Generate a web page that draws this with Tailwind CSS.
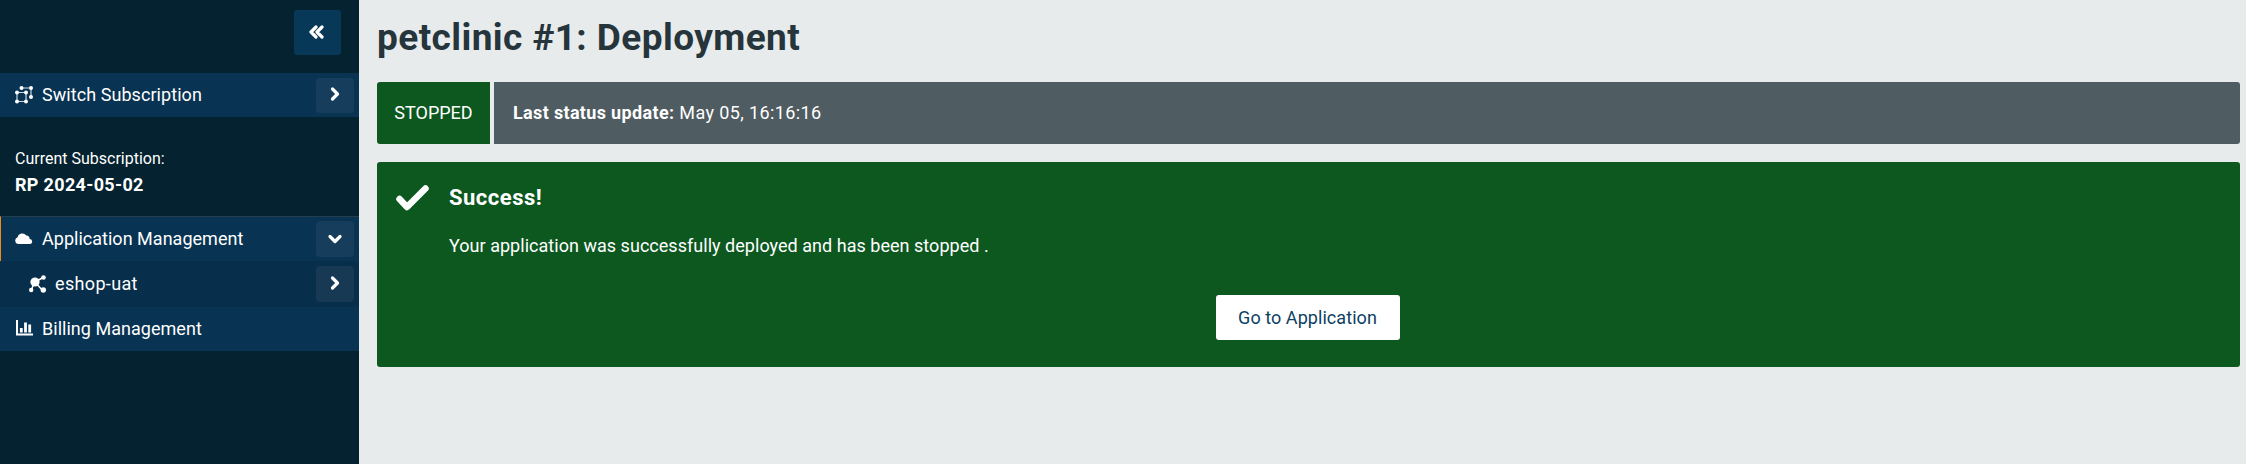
<!DOCTYPE html>
<html lang="en">
<head>
<meta charset="utf-8">
<title>petclinic #1: Deployment</title>
<script src="https://cdn.jsdelivr.net/npm/@tailwindcss/browser@4"></script>
</head>
<body class="h-[464px] overflow-hidden bg-[#e7ebec] text-[18px] whitespace-nowrap text-white font-['Roboto',sans-serif]">
<div class="flex h-full">
  <aside class="w-[359px] shrink-0 bg-[#04222f]">
    <div class="flex h-[73px] justify-end pt-2.5 pr-[18px]">
      <button class="flex h-[45px] w-[47px] items-center justify-center rounded-[3px] bg-[#083857]">
        <svg class="mr-[3px] mb-px h-4 w-4" viewBox="0 0 16 16" fill="none" stroke="currentColor" stroke-width="3.200" stroke-linecap="round" stroke-linejoin="round"><path d="M8 3 3 8l5 5M14 3 9 8l5 5"/></svg>
      </button>
    </div>
    <div class="flex h-11 items-center bg-[#083352] pr-[5px] pl-[15px]">
      <svg class="mt-[-1px] h-[18px] w-[18px]" viewBox="0 0 18 18" fill="none" stroke="currentColor"><path d="M2 6.500h9v9H2zM7 2h9v9" stroke-width="1.200" stroke-opacity=".8"/><g fill="currentColor" stroke="none"><circle cx="2" cy="6.500" r="2"/><circle cx="11" cy="6.500" r="2"/><circle cx="2" cy="15.500" r="2"/><circle cx="11" cy="15.500" r="2"/><circle cx="6.500" cy="2" r="2"/><circle cx="16" cy="2" r="2"/><circle cx="16" cy="11" r="2"/></g></svg>
      <span class="ml-[9px] pb-0.5 tracking-[0.06px]">Switch Subscription</span>
      <button class="ml-auto flex h-[35px] w-[38px] items-center justify-center rounded bg-[#163d5b]"><svg class="mb-0.5 h-4 w-4" viewBox="0 0 16 16" fill="none" stroke="currentColor" stroke-width="3.200" stroke-linecap="round" stroke-linejoin="round"><path d="m5.500 3 5 5-5 5"/></svg></button>
    </div>
    <div class="h-[99px] pt-[30px] pl-[15px]">
      <div class="h-6 text-[16px] leading-6">Current Subscription:</div>
      <div class="h-7 leading-7 font-bold tracking-[0.33px]">RP 2024-05-02</div>
    </div>
    <div class="flex h-[45px] items-center border-t border-l border-t-[#233f4d] border-l-[#f08a1c] bg-[#083352] pr-[5px] pl-[14px]">
      <svg class="h-[18px] w-[18px]" viewBox="0 0 18 18" fill="currentColor"><path d="M3.500 14A3.500 3.500 0 0 1 2.600 7.200 4.800 4.800 0 0 1 11.300 5.600a3 3 0 0 1 3.300 3.300A2.600 2.600 0 0 1 15.300 14z"/></svg>
      <span class="ml-[9px] pb-0.5 tracking-[0.02px]">Application Management</span>
      <button class="ml-auto flex h-9 w-[38px] items-center justify-center rounded bg-[#163d5b]"><svg class="h-4 w-4" viewBox="0 0 16 16" fill="none" stroke="currentColor" stroke-width="3.200" stroke-linecap="round" stroke-linejoin="round"><path d="m3 5.500 5 5 5-5"/></svg></button>
    </div>
    <div class="flex h-[46px] items-center bg-[#072e4a] pr-[5px] pl-[29px]">
      <svg class="h-[18px] w-[18px]" viewBox="0 0 18 18" fill="currentColor"><path d="m6 7 9-5M6 7l8 9M5 8l-3 8" stroke="currentColor" stroke-width="1.500"/><circle cx="6" cy="7" r="4.600"/><circle cx="14.500" cy="2.500" r="2.300"/><circle cx="14.300" cy="15" r="2.700"/><circle cx="2.200" cy="15" r="2.200"/></svg>
      <span class="ml-[8px] pb-0.5 tracking-[0.35px]">eshop-uat</span>
      <button class="ml-auto flex h-9 w-[38px] items-center justify-center rounded bg-[#183953]"><svg class="mb-0.5 h-4 w-4" viewBox="0 0 16 16" fill="none" stroke="currentColor" stroke-width="3.200" stroke-linecap="round" stroke-linejoin="round"><path d="m5.500 3 5 5-5 5"/></svg></button>
    </div>
    <div class="flex h-11 items-center bg-[#083352] pl-[15px]">
      <svg class="mb-[3px] h-[18px] w-[18px]" viewBox="0 0 18 18" fill="none" stroke="currentColor"><path d="M2 1v14.500h16" stroke-width="2"/><path d="M6.300 13.500V9M10.500 13.500V3.500M14.700 13.500V5.500" stroke-width="2.800"/></svg>
      <span class="ml-[9px] pb-0.5 tracking-[0.03px]">Billing Management</span>
    </div>
  </aside>
  <main class="min-w-0 flex-1 pr-1.5 pl-[18px]">
    <h1 class="h-[82px] pt-4 text-[37px] leading-[44px] font-bold tracking-[0.42px] text-[#26343b]">petclinic #1: Deployment</h1>
    <div class="flex h-[62px] gap-1">
      <div class="flex w-[113px] items-center justify-center rounded-l-[3px] bg-[#0c581f] pb-0.5">STOPPED</div>
      <div class="flex flex-1 items-center gap-[5px] rounded-r-[3px] bg-[#4f5c61] pb-0.5 pl-[19px]"><b class="tracking-[0.34px]">Last status update:</b><span class="tracking-[0.38px]">May 05, 16:16:16</span></div>
    </div>
    <section class="mt-[18px] h-[205px] rounded-[3px] bg-[#0c581f] pt-[22px]">
      <div class="flex items-center">
        <svg class="ml-[18px] h-[28px] w-[35px]" viewBox="0 0 35 28" fill="none" stroke="currentColor" stroke-width="6.500" stroke-linecap="round" stroke-linejoin="round"><path d="m4.500 15 7.500 8L30.500 4.500"/></svg>
        <h2 class="ml-[19px] text-[22px] leading-7 font-bold tracking-[0.5px]">Success!</h2>
      </div>
      <p class="mt-5 pl-[72px] leading-7 tracking-[0.03px]">Your application was successfully deployed and has been stopped .</p>
      <div class="mt-[35px] flex justify-center pr-0.5"><button class="h-[45px] w-[184px] rounded-[3px] bg-white tracking-[0.06px] text-[#0b4163]">Go to Application</button></div>
    </section>
  </main>
</div>
</body>
</html>
